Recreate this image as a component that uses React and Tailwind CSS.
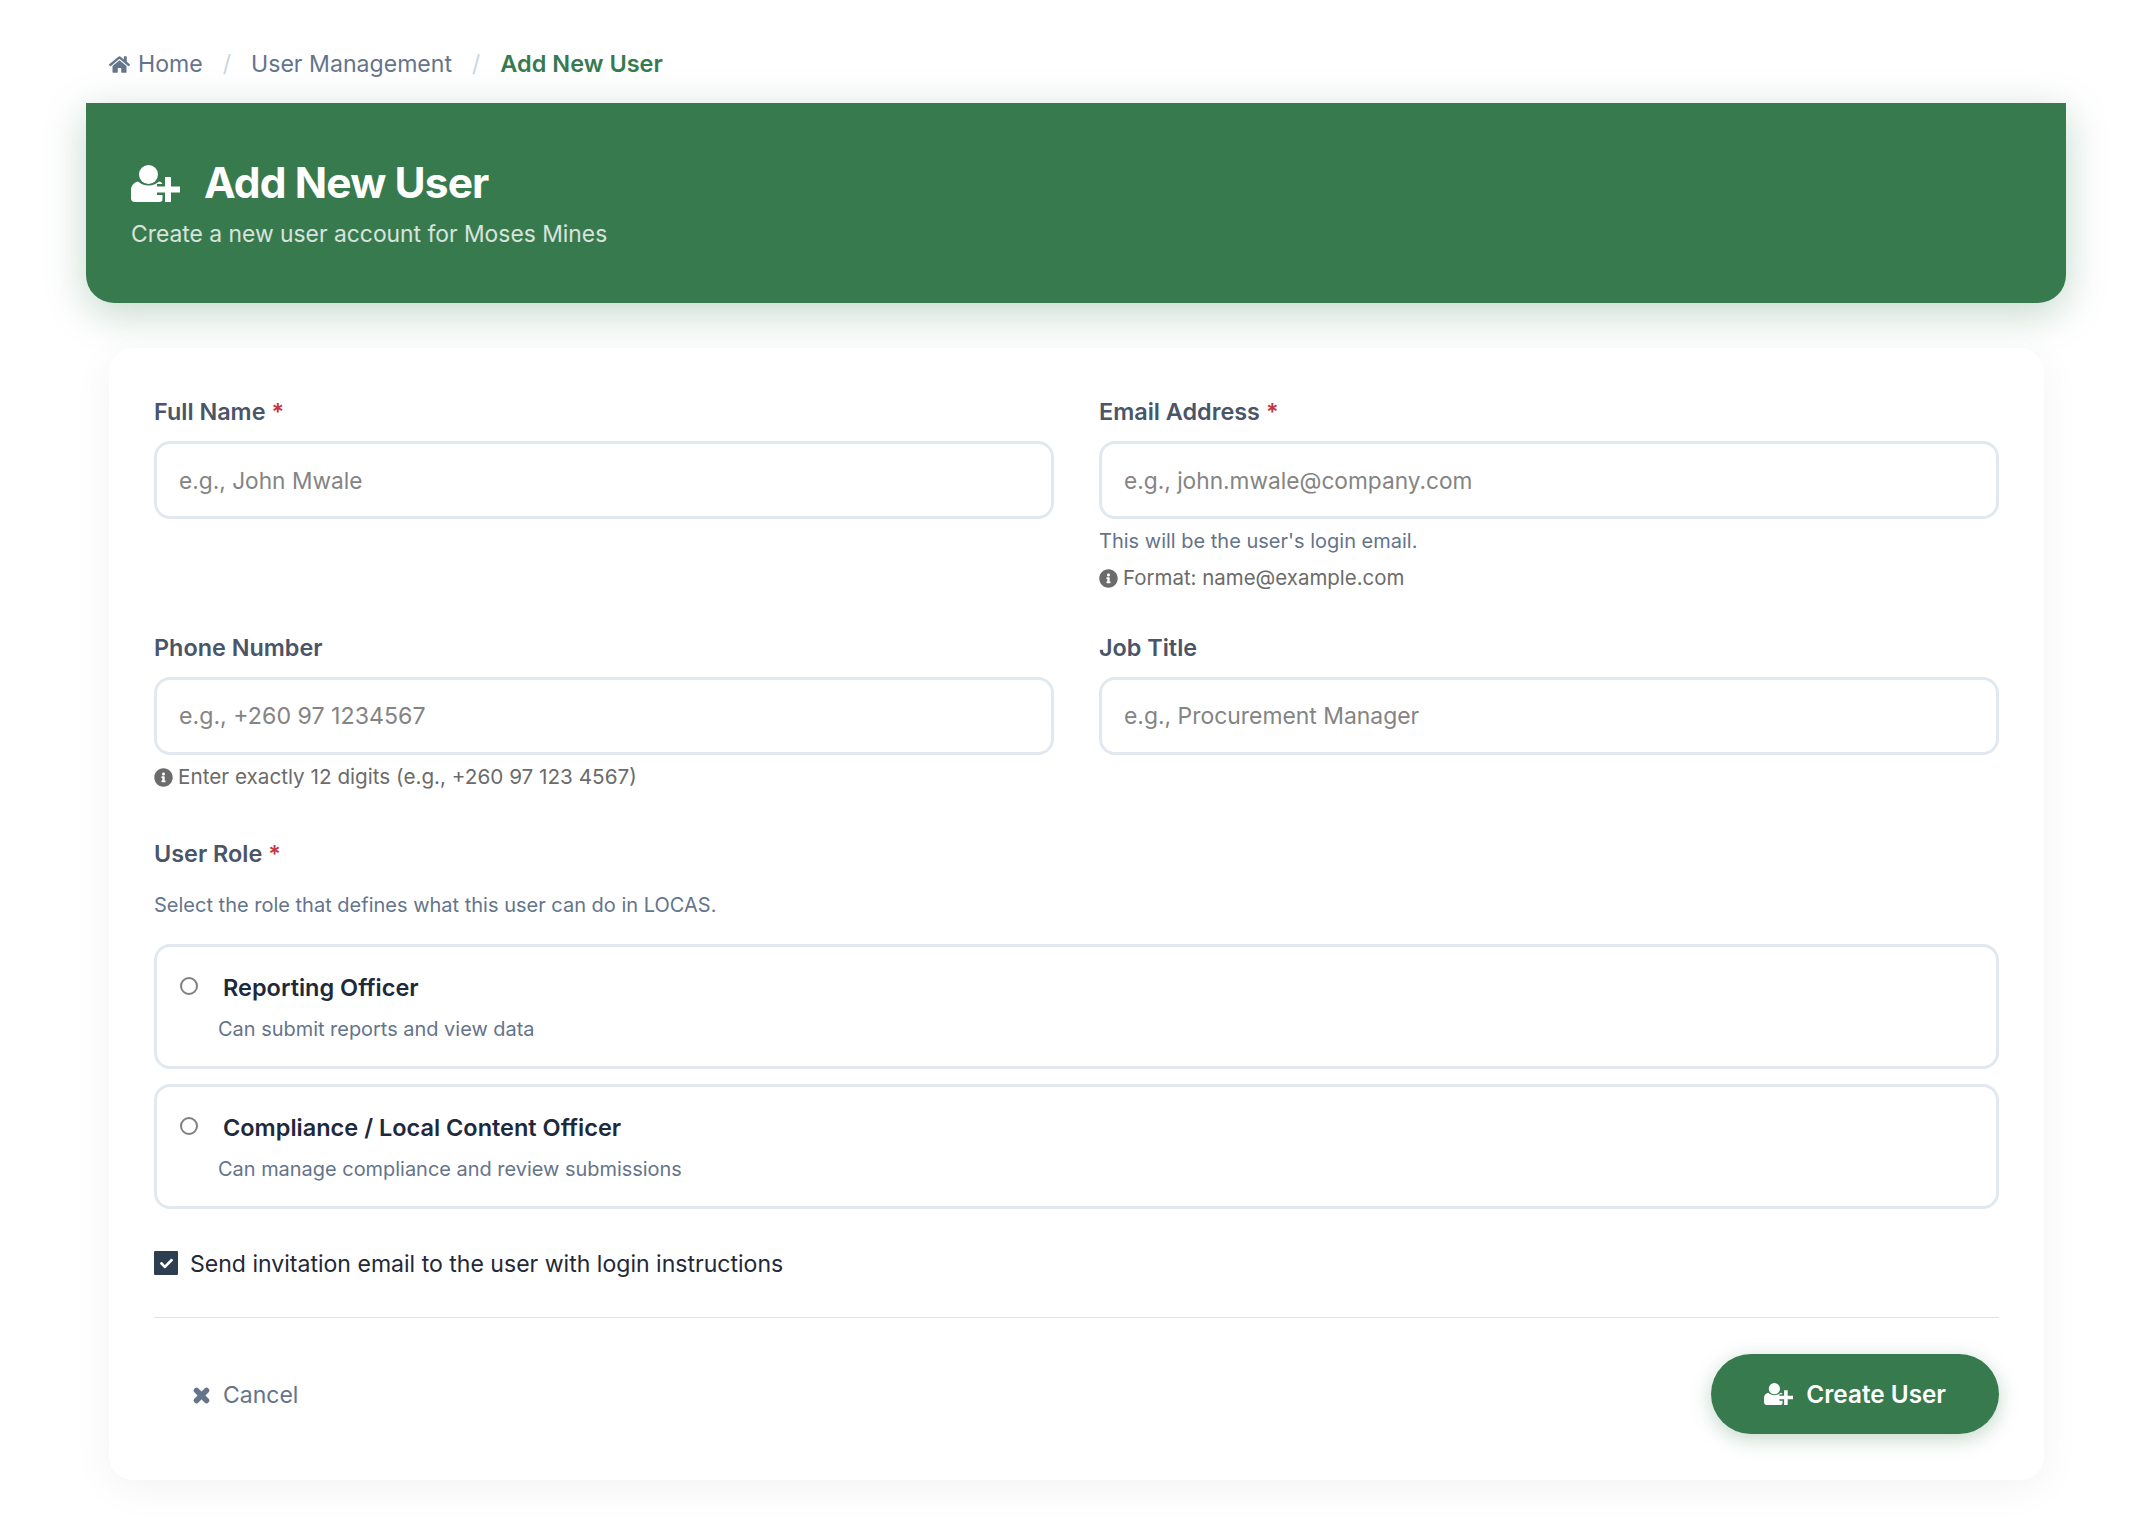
import React from "react";
import { FaHome, FaInfoCircle, FaCheck } from "react-icons/fa";

const UserPlusIcon = ({ className }) => {
  return (
    <svg viewBox="0 0 49 37" className={className} fill="currentColor">
      <circle cx="17.5" cy="9.5" r="9.5" />
      <path d="M7 16.5c3 2.8 6.5 4 10.5 4s7.500-1.200 10.500-4c2.500.5 4 2 4 4V33a4 4 0 0 1-4 4H4a4 4 0 0 1-4-4v-8c0-4.500 3-7.500 7-8.500z" />
      <path d="M37 14v21M26 24.500h21" fill="none" stroke="#377a4e" strokeWidth="11" />
      <path d="M37 12v25M24 24.500h25" fill="none" stroke="currentColor" strokeWidth="6" />
    </svg>
  );
};

const CancelIcon = () => {
  return (
    <svg viewBox="0 0 17 17" className="w-[17px] h-[17px]">
      <path d="M3.500 3.500l10 10M13.500 3.500l-10 10" fill="none" stroke="currentColor" strokeWidth="5.500" strokeLinecap="round" />
    </svg>
  );
};

const Required = () => {
  return <span className="text-[#c53545] ml-[6px]">*</span>;
};

const Field = ({ label, required, placeholder, inputSize = "text-[22.7px]", children }) => {
  return (
    <div>
      <label className="block h-[36px] mb-[12px] text-[23.4px] leading-[38px] font-semibold text-[#4a5568]">
        {label}
        {required && <Required />}
      </label>
      <input
        type="text"
        placeholder={placeholder}
        className={`block w-full h-[78px] px-[22px] border-[3px] border-[#e2e8f0] rounded-[16px] bg-white outline-none placeholder:text-[#848484] ${inputSize}`}
      />
      {children}
    </div>
  );
};

const Hint = ({ className, children }) => {
  return (
    <p className={`flex items-center gap-[5px] leading-[32px] text-[#6b6b6b] ${className}`}>
      <FaInfoCircle className="w-[19px] h-[19px]" />
      {children}
    </p>
  );
};

const RoleOption = ({ title, description }) => {
  return (
    <label className="block h-[125px] pt-[25px] pl-[23px] border-[3px] border-[#e2e8f0] rounded-[16px]">
      <div className="flex items-start gap-[25px]">
        <input type="radio" name="role" className="appearance-none w-[18px] h-[18px] m-0 mt-[5px] rounded-full border-2 border-[#808080] bg-white" />
        <span className="text-[23.5px] leading-[32px] font-semibold text-[#1e293b]">{title}</span>
      </div>
      <p className="mt-[9px] ml-[38px] text-[19.95px] leading-[32px] text-[#64748b]">{description}</p>
    </label>
  );
};

const App = () => {
  return (
    <div className="min-h-screen bg-white pl-[109px] pr-[96px] pt-[44px] pb-[50px] font-['Inter',sans-serif]">
      <nav className="flex items-center h-[40px] mb-[19px] text-[23.1px] leading-[40px] text-[#64748b]">
        <FaHome className="w-[21px] h-[19px] mr-[8px]" />
        <span>Home</span>
        <span className="mx-[20px] text-[#cbd5e0]">/</span>
        <span>User Management</span>
        <span className="mx-[20px] text-[#cbd5e0]">/</span>
        <span className="text-[23.5px] font-semibold text-[#377a4e]">Add New User</span>
      </nav>

      <header className="-ml-[23px] -mr-[22px] pt-[45px] pb-[53px] pl-[45px] rounded-b-[28px] bg-[#377a4e] text-white shadow-[0_10px_40px_rgba(56,123,79,0.3)]">
        <div className="flex items-center gap-[24px] h-[70px]">
          <UserPlusIcon className="w-[49px] h-[37px]" />
          <h1 className="text-[42.5px] leading-[70px] font-bold tracking-[-0.9px]">Add New User</h1>
        </div>
        <p className="text-[22.85px] leading-[32px] text-white/80">Create a new user account for Moses Mines</p>
      </header>

      <form className="mt-[45px] pt-[45px] px-[45px] pb-[46px] rounded-[24px] bg-white shadow-[0_8px_40px_rgba(0,0,0,0.05)]">
        <div className="grid grid-cols-2 gap-x-[45px] gap-y-[36px]">
          <Field label="Full Name" required placeholder="e.g., John Mwale" />
          <Field label="Email Address" required placeholder="e.g., john.mwale@company.com">
            <p className="mt-[6px] mb-[5px] text-[20px] leading-[32px] text-[#64748b]">This will be the user's login email.</p>
            <Hint className="-mb-[1px] text-[20.45px]">Format: name@example.com</Hint>
          </Field>
          <Field label="Phone Number" placeholder="e.g., +260 97 1234567" inputSize="text-[23.2px]">
            <Hint className="mt-[6px] text-[20.7px]">Enter exactly 12 digits (e.g., +260 97 123 4567)</Hint>
          </Field>
          <Field label="Job Title" placeholder="e.g., Procurement Manager" inputSize="text-[22.9px]" />
        </div>

        <div className="mt-[42px] h-[36px] text-[23.4px] leading-[38px] font-semibold text-[#4a5568]">
          User Role
          <Required />
        </div>
        <p className="mt-[18px] mb-[23px] text-[20px] leading-[32px] text-[#64748b]">
          Select the role that defines what this user can do in LOCAS.
        </p>
        <div className="flex flex-col gap-[15px]">
          <RoleOption title="Reporting Officer" description="Can submit reports and view data" />
          <RoleOption title="Compliance / Local Content Officer" description="Can manage compliance and review submissions" />
        </div>

        <label className="flex items-center gap-[12px] mt-[38px] h-[32px] text-[23.05px] leading-[32px] text-[#1f2937]">
          <span className="flex items-center justify-center w-[24px] h-[24px] rounded-[1px] bg-[#2c3e50] text-white">
            <FaCheck className="w-[13px] h-[13px]" />
          </span>
          <span className="pt-[2px]">Send invitation email to the user with login instructions</span>
        </label>

        <div className="flex items-center justify-between mt-[38px] pt-[36px] border-t border-[#e2e2e2]">
          <button type="button" className="flex items-center gap-[13px] mt-[2px] pl-[39px] text-[23px] text-[#64748b]">
            <CancelIcon />
            Cancel
          </button>
          <button type="button" className="flex items-center gap-[13px] h-[80px] px-[53px] rounded-full bg-[#377a4e] text-[24.3px] font-semibold text-white shadow-[0_5px_20px_rgba(56,123,79,0.3)]">
            <UserPlusIcon className="w-[29px] h-[22px]" />
            Create User
          </button>
        </div>
      </form>
    </div>
  );
};

export default App;
